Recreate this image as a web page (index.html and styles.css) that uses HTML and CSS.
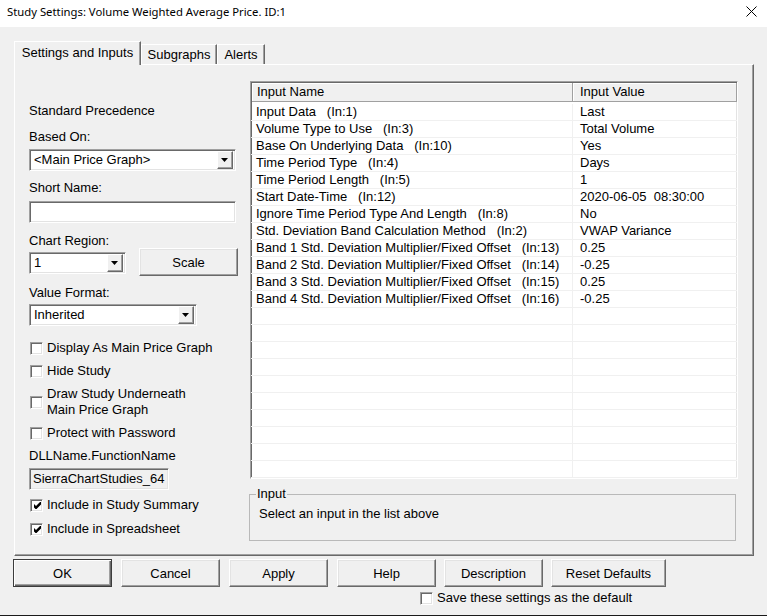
FILE: index.html
```html
<!DOCTYPE html>
<html>
<head>
<meta charset="utf-8">
<link rel="stylesheet" href="styles.css">
</head>
<body>
<div class="window">
  <div class="titlebar">
    <span class="title">Study Settings: Volume Weighted Average Price. ID:1</span>
    <svg class="close" width="11" height="11" viewBox="0 0 11 11"><path d="M0.5 0.5L10.5 10.5M10.5 0.5L0.5 10.5" stroke="#000" stroke-width="1" fill="none"/></svg>
  </div>
  <div class="tabs">
    <div class="tab sel">Settings and Inputs</div>
    <div class="tab t-sub">Subgraphs</div>
    <div class="tab t-alerts">Alerts</div>
  </div>
  <div class="panel">
    <div class="left">
      <div class="lbl l-std">Standard Precedence</div>
      <div class="lbl l-gap10">Based On:</div>
      <div class="combo c-main"><span class="val">&lt;Main Price Graph&gt;</span><span class="drop"><svg width="7" height="4" viewBox="0 0 7 4"><path d="M0 0H7L3.5 4Z"/></svg></span></div>
      <div class="lbl l-short">Short Name:</div>
      <div class="edit e-short"></div>
      <div class="lbl lbl15 l-gap10">Chart Region:</div>
      <div class="region-row">
        <div class="combo c-region"><span class="val">1</span><span class="drop"><svg width="7" height="4" viewBox="0 0 7 4"><path d="M0 0H7L3.5 4Z"/></svg></span></div>
        <div class="btn b-scale">Scale</div>
      </div>
      <div class="lbl lbl15 l-gap10">Value Format:</div>
      <div class="combo c-format"><span class="val">Inherited</span><span class="drop"><svg width="7" height="4" viewBox="0 0 7 4"><path d="M0 0H7L3.5 4Z"/></svg></span></div>
      <div class="chk k-first"><span class="box"></span><span>Display As Main Price Graph</span></div>
      <div class="chk"><span class="box"></span><span>Hide Study</span></div>
      <div class="chk"><span class="box"></span><span>Draw Study Underneath<br>Main Price Graph</span></div>
      <div class="chk"><span class="box"></span><span>Protect with Password</span></div>
      <div class="lbl l-dll">DLLName.FunctionName</div>
      <div class="edit ro">SierraChartStudies_64</div>
      <div class="chk"><span class="box"><svg width="7" height="7" viewBox="0 0 7 7"><path d="M0 2L2 4L7 -1V2.5L2 7.5L0 5.5Z"/></svg></span><span>Include in Study Summary</span></div>
      <div class="chk k-last"><span class="box"><svg width="7" height="7" viewBox="0 0 7 7"><path d="M0 2L2 4L7 -1V2.5L2 7.5L0 5.5Z"/></svg></span><span>Include in Spreadsheet</span></div>
    </div>
    <div class="right">
      <div class="list">
        <div class="lhead"><div class="hc hc1">Input Name</div><div class="hc hc2">Input Value</div></div>
        <div class="lbody">
          <div class="row"><span class="c1">Input Data   (In:1)</span><span class="c2">Last</span></div>
          <div class="row"><span class="c1">Volume Type to Use   (In:3)</span><span class="c2">Total Volume</span></div>
          <div class="row"><span class="c1">Base On Underlying Data   (In:10)</span><span class="c2">Yes</span></div>
          <div class="row"><span class="c1">Time Period Type   (In:4)</span><span class="c2">Days</span></div>
          <div class="row"><span class="c1">Time Period Length   (In:5)</span><span class="c2">1</span></div>
          <div class="row"><span class="c1">Start Date-Time   (In:12)</span><span class="c2">2020-06-05  08:30:00</span></div>
          <div class="row"><span class="c1">Ignore Time Period Type And Length   (In:8)</span><span class="c2">No</span></div>
          <div class="row"><span class="c1">Std. Deviation Band Calculation Method   (In:2)</span><span class="c2">VWAP Variance</span></div>
          <div class="row"><span class="c1">Band 1 Std. Deviation Multiplier/Fixed Offset   (In:13)</span><span class="c2">0.25</span></div>
          <div class="row"><span class="c1">Band 2 Std. Deviation Multiplier/Fixed Offset   (In:14)</span><span class="c2">-0.25</span></div>
          <div class="row"><span class="c1">Band 3 Std. Deviation Multiplier/Fixed Offset   (In:15)</span><span class="c2">0.25</span></div>
          <div class="row"><span class="c1">Band 4 Std. Deviation Multiplier/Fixed Offset   (In:16)</span><span class="c2">-0.25</span></div>
          <div class="row"><span class="c1"></span><span class="c2"></span></div>
          <div class="row"><span class="c1"></span><span class="c2"></span></div>
          <div class="row"><span class="c1"></span><span class="c2"></span></div>
          <div class="row"><span class="c1"></span><span class="c2"></span></div>
          <div class="row"><span class="c1"></span><span class="c2"></span></div>
          <div class="row"><span class="c1"></span><span class="c2"></span></div>
          <div class="row"><span class="c1"></span><span class="c2"></span></div>
          <div class="row"><span class="c1"></span><span class="c2"></span></div>
          <div class="row"><span class="c1"></span><span class="c2"></span></div>
          <div class="row"><span class="c1"></span><span class="c2"></span></div>
        </div>
      </div>
      <fieldset class="group">
        <legend>Input</legend>
        <div class="gtext">Select an input in the list above</div>
      </fieldset>
    </div>
  </div>
  <div class="buttons">
    <div class="btn default">OK</div>
    <div class="btn">Cancel</div>
    <div class="btn">Apply</div>
    <div class="btn">Help</div>
    <div class="btn b-desc">Description</div>
    <div class="btn b-reset">Reset Defaults</div>
  </div>
  <div class="savebar">
    <div class="chk"><span class="box"></span><span>Save these settings as the default</span></div>
  </div>
</div>
</body>
</html>
```

FILE: styles.css
```css
html, body {
  margin: 0;
  padding: 0;
}
body {
  width: 767px;
  height: 616px;
  overflow: hidden;
  background: #f0f0f0;
  font-family: "Liberation Sans", Arial, sans-serif;
  font-size: 13px;
  color: #000;
}
.window {
  width: 767px;
  height: 615px;
  border-bottom: 1px solid #1a1a1a;
  background: #f0f0f0;
}
.titlebar {
  height: 27px;
  background: #fff;
  display: flex;
  align-items: flex-start;
}
.title {
  font-family: "Noto Sans", "Open Sans", sans-serif;
  font-size: 11.3px;
  line-height: 16px;
  padding: 4px 0 0 7px;
  color: #000;
}
.close {
  margin: 6px 10px 0 auto;
}

/* tabs */
.tabs {
  display: flex;
  align-items: flex-end;
  height: 23px;
  margin-top: 14px;
  padding-left: 14px;
  position: relative;
  z-index: 1;
}
.tab {
  box-sizing: border-box;
  height: 20px;
  border: 1px solid;
  border-bottom: none;
  border-color: #fff #696969 transparent #fff;
  box-shadow: inset -1px 0 0 #a0a0a0;
  background: #f0f0f0;
  text-align: center;
  line-height: 19px;
}
.tab.sel {
  height: 24px;
  width: 127px;
  margin-bottom: -1px;
  line-height: 22px;
}
.t-sub {
  width: 76px;
}
.t-alerts {
  width: 48px;
}

/* panel */
.panel {
  box-sizing: border-box;
  width: 740px;
  height: 492px;
  margin-left: 14px;
  border: 1px solid;
  border-color: #fff #696969 #696969 #fff;
  box-shadow: inset -1px -1px 0 #a0a0a0;
  display: flex;
  align-items: flex-start;
}
.left {
  width: 208px;
  margin-left: 14px;
  padding-top: 38px;
  display: flex;
  flex-direction: column;
  align-items: flex-start;
}
.lbl {
  line-height: 16px;
  white-space: nowrap;
}
.lbl15 {
  line-height: 15px;
}
.l-gap10 {
  margin-top: 10px;
}
.l-short {
  margin-top: 9px;
}
.l-dll {
  margin-top: 7px;
}

/* combo + edit */
.combo {
  box-sizing: border-box;
  height: 22px;
  display: flex;
  background: #fff;
  border: 1px solid;
  border-color: #a0a0a0 #fff #fff #a0a0a0;
  box-shadow: inset 1px 1px 0 #696969, inset -1px -1px 0 #e3e3e3;
  padding: 1px 2px 1px 1px;
}
.combo .val {
  flex: 1;
  padding-left: 3px;
  line-height: 18px;
  white-space: nowrap;
}
.drop {
  box-sizing: border-box;
  width: 16px;
  height: 18px;
  background: #f0f0f0;
  border: 1px solid;
  border-color: #fff #696969 #696969 #fff;
  box-shadow: inset -1px -1px 0 #a0a0a0;
  display: flex;
  align-items: center;
  justify-content: center;
  padding: 0 1px 1px 0;
}
.c-main {
  width: 207px;
  margin-top: 4px;
}
.edit {
  box-sizing: border-box;
  height: 22px;
  background: #fff;
  border: 1px solid;
  border-color: #a0a0a0 #fff #fff #a0a0a0;
  box-shadow: inset 1px 1px 0 #696969, inset -1px -1px 0 #e3e3e3;
}
.e-short {
  width: 207px;
  margin-top: 5px;
}
.ro {
  width: 140px;
  margin-top: 4px;
  background: #f0f0f0;
  padding-left: 3px;
  line-height: 20px;
}
.region-row {
  display: flex;
  align-items: flex-start;
  height: 27px;
}
.c-region {
  width: 97px;
  margin-top: 4px;
}
.b-scale {
  width: 98px;
  height: 27px;
  margin-left: 13px;
}
.c-format {
  width: 168px;
  margin-top: 4px;
}

/* buttons */
.btn {
  box-sizing: border-box;
  width: 99px;
  height: 28px;
  background: #f0f0f0;
  border: 1px solid;
  border-color: #fff #696969 #696969 #fff;
  box-shadow: inset -1px -1px 0 #a0a0a0, inset 1px 1px 0 #e3e3e3;
  display: flex;
  align-items: center;
  justify-content: center;
  white-space: nowrap;
}
.btn.default {
  border-color: #3c3c3c;
  box-shadow: inset 1px 1px 0 #fff, inset -1px -1px 0 #696969, inset -2px -2px 0 #a0a0a0;
}

/* checkboxes */
.chk {
  display: flex;
  align-items: center;
  line-height: 16px;
  margin-top: 7px;
  white-space: nowrap;
}
.k-first {
  margin-top: 14px;
}
.k-last {
  margin-top: 8px;
}
.box {
  box-sizing: border-box;
  width: 13px;
  height: 13px;
  margin: 0 4px 0 1px;
  background: #fff;
  border: 1px solid;
  border-color: #a0a0a0 #fff #fff #a0a0a0;
  box-shadow: inset 1px 1px 0 #696969, inset -1px -1px 0 #e3e3e3;
  display: flex;
  align-items: center;
  justify-content: center;
  flex: none;
}
.box svg {
  margin: 1px 0 0 1px;
}

/* right side */
.right {
  width: 488px;
  margin-left: 12px;
  padding-top: 16px;
}
.list {
  box-sizing: border-box;
  width: 488px;
  height: 398px;
  margin-left: 1px;
  background: #fff;
  border: 1px solid;
  border-color: #a0a0a0 #fff #fff #a0a0a0;
  box-shadow: inset 1px 1px 0 #696969, inset -1px -1px 0 #e3e3e3;
  overflow: hidden;
}
.lhead {
  display: flex;
  height: 19px;
  margin: 1px 0 0 1px;
}
.hc {
  box-sizing: border-box;
  height: 19px;
  background: #f0f0f0;
  line-height: 18px;
  border-right: 1px solid #a0a0a0;
  border-bottom: 1px solid #a0a0a0;
  box-shadow: inset 1px 1px 0 #fff;
  white-space: nowrap;
}
.hc1 {
  width: 321px;
  padding-left: 5px;
}
.hc2 {
  width: 164px;
  padding-left: 7px;
}
.lbody {
  padding-top: 2px;
}
.row {
  display: flex;
  height: 17px;
  box-sizing: border-box;
  border-bottom: 1px solid #f0f0f0;
  line-height: 16px;
  white-space: pre;
}
.c1 {
  box-sizing: border-box;
  width: 322px;
  padding-left: 5px;
  border-right: 1px solid #f0f0f0;
  flex: none;
}
.c2 {
  padding-left: 7px;
}
.group {
  box-sizing: border-box;
  width: 487px;
  height: 55px;
  margin: 7px 0 0 0;
  padding: 0 0 0 6px;
  border: 1px solid #b9b9b9;
  min-width: 0;
}
.group legend {
  padding: 0 1px;
  line-height: 16px;
  margin-left: 0;
}
.gtext {
  margin-top: 4px;
  padding-left: 3px;
  line-height: 16px;
}

/* bottom */
.buttons {
  display: flex;
  gap: 9px;
  margin-top: 3px;
  padding-left: 13px;
}
.b-desc {
  margin-left: -1px;
}
.b-reset {
  width: 115px;
  margin-left: -1px;
}
.savebar {
  margin-top: 3px;
  padding-left: 419px;
}
.savebar .chk {
  margin-top: 0;
}
```
